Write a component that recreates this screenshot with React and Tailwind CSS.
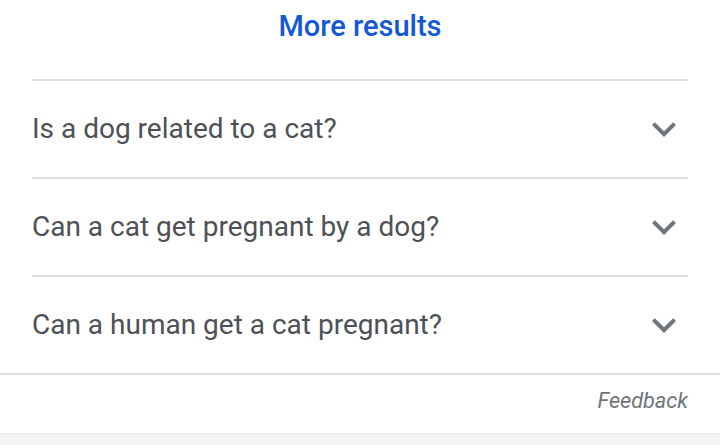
const questions = [
  'Is a dog related to a cat?',
  'Can a cat get pregnant by a dog?',
  'Can a human get a cat pregnant?',
]

function ExpandMore() {
  return (
    <svg width="48" height="48" viewBox="0 0 24 24" className="shrink-0">
      <path d="M16.59 8.59L12 13.17 7.41 8.59 6 10l6 6 6-6z" fill="#70757a" />
    </svg>
  )
}

export default function App() {
  return (
    <div className="w-[720px] h-[445px] bg-white flex flex-col font-['Roboto',sans-serif] overflow-hidden">
      {/* More results */}
      <div className="h-[79px] flex justify-center pt-[8px]">
        <span className="text-[29px] leading-[36px] font-medium text-[#1558d6]">More results</span>
      </div>

      {/* Related questions */}
      <div className="mx-[32px] flex flex-col">
        {questions.map(q => (
          <div key={q} className="h-[98px] border-t-2 border-[#dadce0] flex items-center justify-between">
            <span className="text-[28px] leading-[36px] text-[#4d5156]">{q}</span>
            <ExpandMore />
          </div>
        ))}
      </div>

      <div className="h-[60px] border-t-2 border-[#dadce0] flex items-center justify-end pr-[32px] pb-[6px]">
        <span className="text-[21.7px] italic text-[#70757a]">Feedback</span>
      </div>

      <div className="flex-1 bg-[#f1f3f4] border-t border-[#e8eaed]" />
    </div>
  )
}
